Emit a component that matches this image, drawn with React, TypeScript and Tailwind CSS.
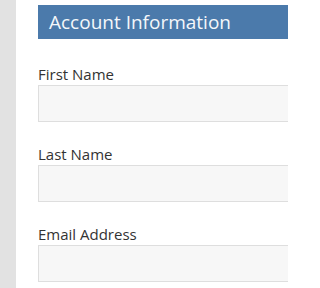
export default function App() {
  const fields = ['First Name', 'Last Name', 'Email Address'];
  return (
    <div className="flex w-[288px] h-[288px] overflow-hidden bg-white font-['Open_Sans',sans-serif]">
      <div className="w-4 shrink-0 bg-[#e2e2e2]" />
      <div className="flex-1 pl-[22px] pt-[5px] min-w-0">
        <div className="h-[34px] w-[300px] bg-[#4b7aab] pl-[11px] flex items-center text-[#f4f7fa] text-[19px] leading-none">
          Account Information
        </div>
        <div className="mt-[25px] flex flex-col gap-[22px]">
          {fields.map((f) => (
            <div key={f} className="flex flex-col">
              <label className="text-[15px] leading-[20px] text-[#333] mb-[1px]">{f}</label>
              <div className="h-[37px] w-[300px] border border-[#dedede] bg-[#f7f7f7]" />
            </div>
          ))}
        </div>
      </div>
    </div>
  );
}
